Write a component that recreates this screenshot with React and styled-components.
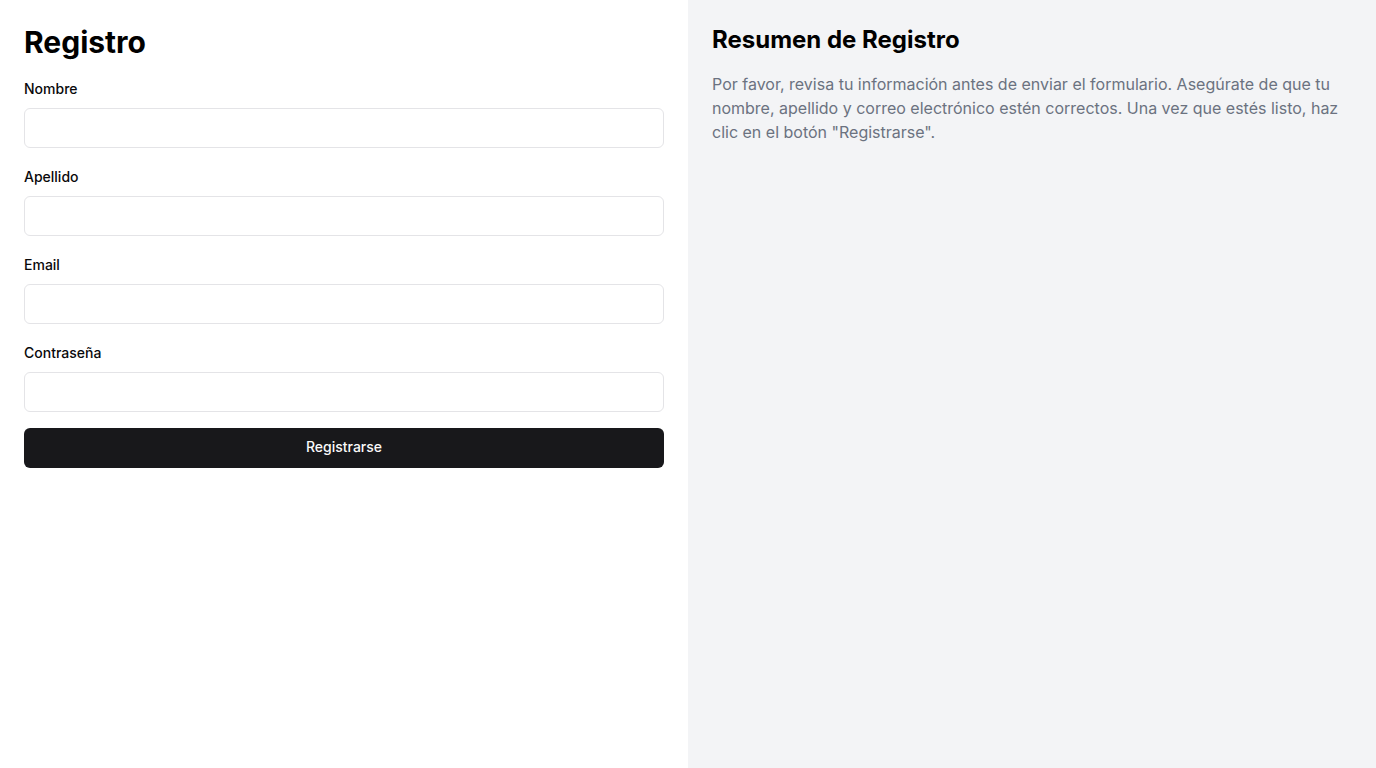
import React from "react";
import styled, { createGlobalStyle } from "styled-components";

const Global = createGlobalStyle`
  * { box-sizing: border-box; }
  html, body { margin: 0; padding: 0; }
  body { font-family: Inter, "Noto Sans", sans-serif; color: #09090b; background: #fff; }
`;

const Page = styled.div`
  display: grid;
  grid-template-columns: 1fr 1fr;
  min-height: 768px;
`;

const FormPanel = styled.section`
  background: #ffffff;
  padding: 24px;
`;

const SummaryPanel = styled.aside`
  background: #f3f4f6;
  padding: 24px;
`;

const Title = styled.h1`
  margin: 0 0 22px;
  font-size: 30px;
  line-height: 36px;
  font-weight: 700;
  color: #000;
`;

const Form = styled.form`
  display: flex;
  flex-direction: column;
`;

const Field = styled.div`
  display: flex;
  flex-direction: column;
  gap: 12px;
  margin-bottom: ${(p) => (p.$last ? "16px" : "22px")};
`;

const Label = styled.label`
  font-size: 14px;
  line-height: 14px;
  font-weight: 500;
  color: #09090b;
`;

const Input = styled.input`
  height: 40px;
  width: 100%;
  border: 1px solid #e4e4e7;
  border-radius: 6px;
  background: #fff;
  padding: 8px 12px;
  font: inherit;
  font-size: 14px;
  outline: none;
`;

const Button = styled.button`
  height: 40px;
  width: 100%;
  border: none;
  border-radius: 6px;
  background: #18181b;
  color: #fafafa;
  font-family: inherit;
  font-size: 14px;
  line-height: 20px;
  font-weight: 500;
  padding: 0 16px 2px;
  cursor: pointer;
`;

const SummaryTitle = styled.h2`
  margin: 0 0 16px;
  font-size: 24px;
  line-height: 32px;
  font-weight: 700;
  color: #000;
`;

const SummaryText = styled.p`
  margin: 0;
  font-size: 16px;
  line-height: 24px;
  color: #6b7280;
`;

const fields = [
  { id: "nombre", label: "Nombre", type: "text" },
  { id: "apellido", label: "Apellido", type: "text" },
  { id: "email", label: "Email", type: "email" },
  { id: "password", label: "Contraseña", type: "password" },
];

export default function App() {
  return (
    <>
      <Global />
      <Page>
        <FormPanel>
          <Title>Registro</Title>
          <Form onSubmit={(e) => e.preventDefault()}>
            {fields.map((f, i) => (
              <Field key={f.id} $last={i === fields.length - 1}>
                <Label htmlFor={f.id}>{f.label}</Label>
                <Input id={f.id} type={f.type} />
              </Field>
            ))}
            <Button type="submit">Registrarse</Button>
          </Form>
        </FormPanel>
        <SummaryPanel>
          <SummaryTitle>Resumen de Registro</SummaryTitle>
          <SummaryText>
            Por favor, revisa tu información antes de enviar el formulario. Asegúrate de que tu
            nombre, apellido y correo electrónico estén correctos. Una vez que estés listo, haz
            clic en el botón "Registrarse".
          </SummaryText>
        </SummaryPanel>
      </Page>
    </>
  );
}
